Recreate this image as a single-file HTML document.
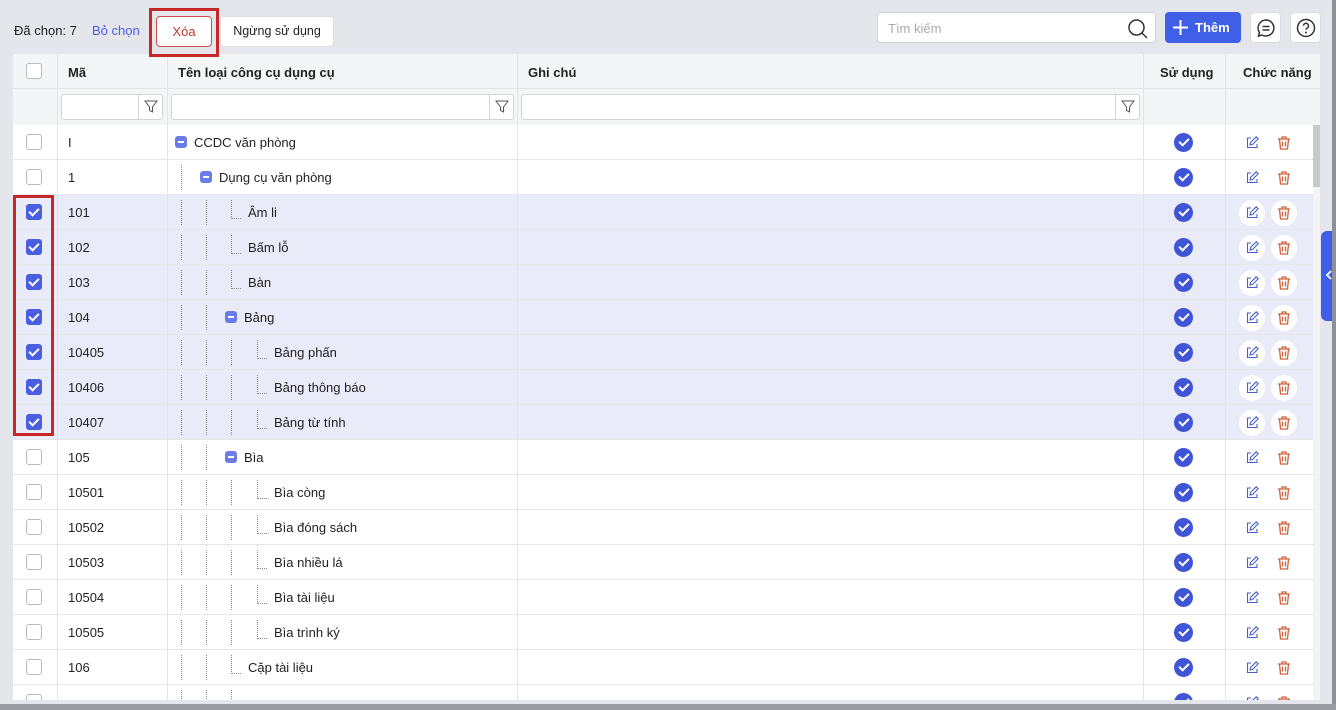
<!DOCTYPE html>
<html><head><meta charset="utf-8">
<style>
*{box-sizing:border-box;margin:0;padding:0}
body{width:1336px;height:710px;overflow:hidden;background:#e4e6ec;font-family:"Liberation Sans",Arial,sans-serif;font-size:13px;color:#222;position:relative}
.abs{position:absolute}
.tbl{position:absolute;left:13px;top:54px;width:1307px;height:646px;background:#fff;overflow:hidden}
.hdr{position:absolute;left:0;top:0;width:1307px;height:35px;background:#f4f5f7;border-bottom:1px solid #e3e4e8}
.flt{position:absolute;left:0;top:35px;width:1307px;height:36px;background:#f4f5f7}
.th{position:absolute;top:11px;font-weight:bold;font-size:13px;color:#222}
.vl{position:absolute;top:0;width:1px;background:#e3e4e8}
.row{position:absolute;left:0;width:1300px;height:35px;border-bottom:1px solid #e6e7ea;background:#fff}
.row.sel{background:#e9ebf9}
.cb{position:absolute;left:13px;top:9px;width:16px;height:16px;border:1px solid #b8bbc2;border-radius:3px;background:#fff}
.cb.on{background:#4a5ee0;border-color:#4a5ee0}
.cb.on:after{content:"";position:absolute;left:4px;top:1px;width:4px;height:8px;border:solid #fff;border-width:0 2px 2px 0;transform:rotate(45deg)}
.code{position:absolute;left:55px;top:10px}
.g{position:absolute;top:5px;height:25px;border-left:1px dotted #888}
.cn{position:absolute;top:23px;width:10px;border-top:1px dotted #888}
.fold{position:absolute;top:11px;width:12px;height:12px;background:#6b7ce8;border-radius:3px}
.fold:after{content:"";position:absolute;left:3px;top:5px;width:6px;height:2px;background:#fff}
.nm{position:absolute;top:10px}
.ok{position:absolute;left:1161px;top:8px;width:19px;height:19px;border-radius:50%;background:#3f55d6}
.ok:after{content:"";position:absolute;left:7px;top:3px;width:4px;height:8px;border:solid #fff;border-width:0 2.5px 2.5px 0;transform:rotate(45deg)}
.ib{position:absolute;top:5px;width:26px;height:26px;border-radius:50%}
.sel .ib{background:#fff}
.ib svg{position:absolute;left:5px;top:5px}
.inp{position:absolute;top:5px;height:26px;background:#fff;border:1px solid #d2d4da;border-radius:3px}
.fb{position:absolute;right:0;top:0;width:24px;height:24px;border-left:1px solid #d2d4da}
</style></head><body>
<div class="abs" style="left:14px;top:23px;font-size:13px">Đã chọn: 7</div>
<div class="abs" style="left:92px;top:23px;color:#4a5ee0">Bỏ chọn</div>
<div class="abs" style="left:156px;top:16px;width:56px;height:31px;background:#fff;border:1px solid #c95050;border-radius:4px;color:#c0392b;text-align:center;line-height:29px">Xóa</div>
<div class="abs" style="left:220px;top:16px;width:114px;height:31px;background:#fff;border:1px solid #dcdde2;border-radius:4px;text-align:center;line-height:29px;font-size:12.5px">Ngừng sử dụng</div>
<div class="abs" style="left:877px;top:12px;width:279px;height:31px;background:#fff;border:1px solid #d2d4da;border-radius:4px;color:#aaa;padding:8px 10px">Tìm kiếm
<svg class="abs" style="left:249px;top:5px" width="22" height="22" viewBox="0 0 22 22"><circle cx="9.5" cy="9.5" r="7.5" fill="none" stroke="#333" stroke-width="1.5"/><line x1="15" y1="15" x2="20" y2="20" stroke="#333" stroke-width="1.5"/></svg></div>
<div class="abs" style="left:1165px;top:12px;width:76px;height:31px;background:#3f5fe6;border-radius:4px;color:#fff;font-weight:bold;font-size:13px;line-height:31px;padding-left:30px">Thêm
<svg class="abs" style="left:8px;top:8px" width="15" height="15"><path d="M7.5 0V15M0 7.5H15" stroke="#fff" stroke-width="2"/></svg></div>
<div class="abs" style="left:1250px;top:12px;width:31px;height:31px;background:#fff;border:1px solid #dcdde2;border-radius:4px">
<svg class="abs" style="left:5px;top:5px" width="20" height="20" viewBox="0 0 20 20"><path d="M10 2a8 8 0 1 1-4 15l-3.5 1 1-3.5A8 8 0 0 1 10 2z" fill="none" stroke="#333" stroke-width="1.5"/><path d="M6.5 8.5h7M6.5 12h7" stroke="#333" stroke-width="1.5"/></svg></div>
<div class="abs" style="left:1290px;top:12px;width:31px;height:31px;background:#fff;border:1px solid #dcdde2;border-radius:4px">
<svg class="abs" style="left:5px;top:5px" width="20" height="20" viewBox="0 0 20 20"><circle cx="10" cy="10" r="8.5" fill="none" stroke="#333" stroke-width="1.5"/><path d="M7.5 7.8a2.5 2.5 0 1 1 3.5 2.3c-.7.4-1 .9-1 1.7" fill="none" stroke="#333" stroke-width="1.5"/><circle cx="10" cy="14.5" r="1" fill="#333"/></svg></div>

<div class="tbl">
<div class="hdr">
<div class="cb" style="top:9px"></div>
<div class="th" style="left:55px">Mã</div>
<div class="th" style="left:165px">Tên loại công cụ dụng cụ</div>
<div class="th" style="left:515px">Ghi chú</div>
<div class="th" style="left:1147px">Sử dụng</div>
<div class="th" style="left:1230px">Chức năng</div>
</div>
<div class="flt">
<div class="inp" style="left:48px;width:102px"><div class="fb"><svg style="margin:5px 0 0 5px" width="14" height="14" viewBox="0 0 14 14"><path d="M1 1h12L8.5 7v5l-3-1.5V7z" fill="none" stroke="#555"/></svg></div></div>
<div class="inp" style="left:158px;width:343px"><div class="fb"><svg style="margin:5px 0 0 5px" width="14" height="14" viewBox="0 0 14 14"><path d="M1 1h12L8.5 7v5l-3-1.5V7z" fill="none" stroke="#555"/></svg></div></div>
<div class="inp" style="left:508px;width:619px"><div class="fb"><svg style="margin:5px 0 0 5px" width="14" height="14" viewBox="0 0 14 14"><path d="M1 1h12L8.5 7v5l-3-1.5V7z" fill="none" stroke="#555"/></svg></div></div>
</div>

<div id="rows"></div>
<div class="vl" style="left:44px;height:646px"></div>
<div class="vl" style="left:154px;height:646px"></div>
<div class="vl" style="left:504px;height:646px"></div>
<div class="vl" style="left:1130px;height:646px"></div>
<div class="vl" style="left:1212px;height:646px"></div>
<div class="abs" style="left:1300px;top:71px;width:7px;height:575px;background:#f4f4f6"></div>
<div class="abs" style="left:1300px;top:71px;width:7px;height:62px;background:#c9c9cc"></div>
</div>
<div class="abs" style="left:149px;top:8px;width:70px;height:49px;border:3px solid #c62828;z-index:5"></div>
<div class="abs" style="left:1321px;top:231px;width:15px;height:90px;background:#3f5fe6;border-radius:6px 0 0 6px"><svg class="abs" style="left:4px;top:39px" width="8" height="10"><path d="M6 1L2 5l4 4" fill="none" stroke="#fff" stroke-width="1.8"/></svg></div>
<div class="abs" style="left:13px;top:195px;width:41px;height:241px;border:3px solid #c62828;z-index:5"></div>
<div class="abs" style="left:1332px;top:0;width:4px;height:710px;background:#8f9196"></div>
<div class="abs" style="left:0;top:704px;width:1336px;height:6px;background:#9a9ca1"></div>

<script>
var d=[["I",0,"f","CCDC văn phòng",0],["1",1,"f","Dụng cụ văn phòng",0],["101",2,"l","Âm li",1],["102",2,"l","Bấm lỗ",1],["103",2,"l","Bàn",1],["104",2,"f","Bảng",1],["10405",3,"l","Bảng phấn",1],["10406",3,"l","Bảng thông báo",1],["10407",3,"l","Bảng từ tính",1],["105",2,"f","Bìa",0],["10501",3,"l","Bìa còng",0],["10502",3,"l","Bìa đóng sách",0],["10503",3,"l","Bìa nhiều lá",0],["10504",3,"l","Bìa tài liệu",0],["10505",3,"l","Bìa trình ký",0],["106",2,"l","Cặp tài liệu",0],["",2,"l","",0]];
var gx=[168,193,218,244],h="";
var ed='<svg width="16" height="16" viewBox="0 0 16 16"><path d="M7 3H3.5v9.5h9.5V9" fill="none" stroke="#4a5ec8" stroke-width="1.1"/><path d="M6 10l.6-2.6 5.6-5.6 2 2-5.6 5.6z" fill="none" stroke="#4a5ec8" stroke-width="1.1"/></svg>';
var tr='<svg width="16" height="16" viewBox="0 0 16 16"><path d="M2 4h12M6 4V2h4v2M3.5 4l1 10h7l1-10M6.5 6.5v5M9.5 6.5v5" fill="none" stroke="#d2603a" stroke-width="1.3"/></svg>';
d.forEach(function(r,i){
var y=71+i*35,s='<div class="row'+(r[4]?' sel':'')+'" style="top:'+y+'px">';
s+='<div class="cb'+(r[4]?' on':'')+'"></div><div class="code">'+r[0]+'</div>';
var L=r[1];
for(var k=0;k<L;k++)s+='<div class="g" style="left:'+gx[k]+'px"></div>';
if(r[2]=="f"){var ix=162+25*L;s+='<div class="fold" style="left:'+ix+'px"></div><div class="nm" style="left:'+(ix+19)+'px">'+r[3]+'</div>';}
else{var cx=gx[L];s+='<div class="g" style="left:'+cx+'px;height:19px"></div><div class="cn" style="left:'+cx+'px"></div><div class="nm" style="left:'+(cx+17)+'px">'+r[3]+'</div>';}
s+='<div class="ok"></div><div class="ib" style="left:1226px">'+ed+'</div><div class="ib" style="left:1258px">'+tr+'</div></div>';
h+=s;});
document.getElementById("rows").innerHTML=h;
</script>
</body></html>
